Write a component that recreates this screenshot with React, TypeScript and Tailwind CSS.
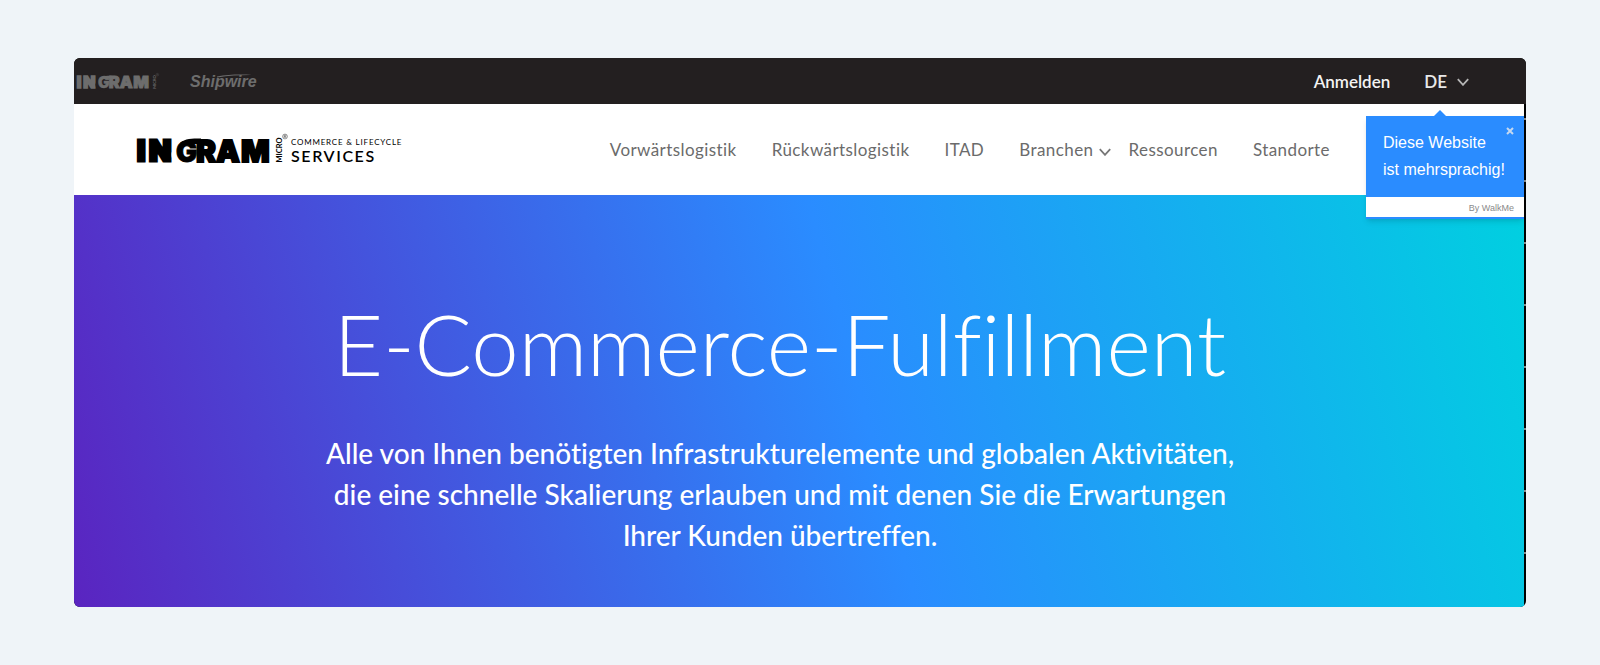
import React from "react";

const navItems = ["Vorwärtslogistik", "Rückwärtslogistik", "ITAD"];

function Chevron({ className }: { className: string }) {
  return (
    <svg viewBox="0 0 12 8" className={className} fill="none" stroke="currentColor" strokeWidth="1.8" aria-hidden="true">
      <path d="M0.8 1.2 6 6.8 11.2 1.2" />
    </svg>
  );
}

function IngramMark({ className, cut }: { className: string; cut: string }) {
  return (
    <svg viewBox="-4 0 156 44" className={className} fill="currentColor" role="img" aria-label="Ingram Micro">
      <g fontFamily="Inter, sans-serif" fontWeight="900" fontSize="30" stroke="currentColor" strokeWidth="1.8">
        <text x="0" y="33" fontSize="29" strokeWidth="3">I</text>
        <text x="12" y="33" fontSize="29" strokeWidth="3">N</text>
        <ellipse cx="48" cy="27" rx="13.5" ry="12" fill={cut} stroke="none" />
        <text x="39" y="33.5" fontSize="28" strokeWidth="1">G</text>
        <path d="M43 15C48 10.5 56 10.6 64 10.6V16H50Z" stroke="none" />
        <text x="59" y="33.5">R</text>
        <text x="79" y="33.5">A</text>
        <text x="104" y="33.5">M</text>
      </g>
      <text transform="translate(145 34.5) rotate(-90)" fontFamily="Lato, sans-serif" fontWeight="700" fontSize="7.5">
        MICRO
      </text>
      <g fill="none" stroke="currentColor" strokeWidth="0.4">
        <circle cx="148" cy="8.5" r="2.4" />
        <path d="M147.2 10V7.2h1.2a.7.7 0 0 1 0 1.5h-1.2M148.3 8.7l.8 1.3" />
      </g>
    </svg>
  );
}

export default function App() {
  return (
    <div className="min-h-screen bg-[#eff4f8] px-[74px] py-[58px] font-['Lato',sans-serif] [font-variant-ligatures:none]">
      <div className="overflow-hidden rounded-md bg-[repeating-linear-gradient(to_bottom,#000000_0px,#000000_60px,#8a8a8a_60px,#8a8a8a_62px)]">
        <div className="flex h-[46px] items-center bg-[#231f20] pt-[2px] pr-[57px]">
          <a href="#ingram" className="text-[#6d6d6d]">
            <IngramMark className="h-6 w-[86px]" cut="#231f20" />
          </a>
          <a
            href="#shipwire"
            className="relative ml-[30px] font-['Liberation_Sans',sans-serif] text-base font-bold text-[#6d6d6d] italic"
          >
            Shipwire
            <svg viewBox="0 0 36 5" className="absolute top-1 right-1 h-[5px] w-9" fill="currentColor" aria-hidden="true">
              <path d="M0 2.6C11 .6 23 .2 35 1 24 .9 12 1.6 0 3.4Z" />
            </svg>
          </a>
          <a href="#login" className="ml-auto text-[17px] font-semibold text-[#f4f4f4]">
            Anmelden
          </a>
          <button className="ml-[34px] flex items-center gap-[10px] text-[17px] font-semibold text-[#e8e8e8]">
            DE
            <Chevron className="h-2 w-3 text-[#b5b5b5]" />
          </button>
        </div>

        <div className="mr-[2px]">
          <header className="relative flex h-[91px] items-center bg-white pr-[194px] pl-[59px]">
            <a href="#home" className="flex items-center text-black">
              <IngramMark className="h-11 w-[156px]" cut="#ffffff" />
              <span className="ml-[2px] flex flex-col">
                <span className="text-[8px] leading-3 tracking-widest">COMMERCE &amp; LIFECYCLE</span>
                <span className="text-base leading-4 font-semibold tracking-widest">SERVICES</span>
              </span>
            </a>
            <nav className="ml-auto flex items-center text-[17px] tracking-wide text-[#6b6b6b]">
              {navItems.map((item) => (
                <a key={item} href="#nav" className="mr-[35px]">
                  {item}
                </a>
              ))}
              <button className="mr-[17px] flex items-center gap-[6px] tracking-wide">
                Branchen
                <Chevron className="mt-1 h-2 w-3 text-[#777777]" />
              </button>
              <a href="#nav" className="mr-[35px]">
                Ressourcen
              </a>
              <a href="#nav">Standorte</a>
            </nav>

            <aside className="absolute top-3 right-0 z-10 w-[158px] border-b-2 border-[#2a8cff] bg-white font-['Liberation_Sans',sans-serif] shadow-md">
              <svg viewBox="0 0 12 6" className="absolute -top-[6px] left-[68px] h-[6px] w-3" aria-hidden="true">
                <path d="M0 6 6 0 12 6Z" fill="#2a8cff" />
              </svg>
              <div className="relative bg-[#2a8cff] px-[17px] pt-[13px] pb-[14px] text-base leading-[27px] text-white">
                Diese Website
                <br />
                ist mehrsprachig!
                <button aria-label="Schließen" className="absolute top-[11px] right-[10px]">
                  <svg viewBox="0 0 8 8" className="h-2 w-2" stroke="#c4d8f0" strokeWidth="2" aria-hidden="true">
                    <path d="M1 1 7 7M7 1 1 7" />
                  </svg>
                </button>
              </div>
              <p className="pt-[2px] pr-[10px] text-right text-[9px] leading-[18px] text-[#8a8a8a]">By WalkMe</p>
            </aside>
          </header>

          <main className="flex h-[412px] flex-col items-center bg-[linear-gradient(75deg,#5a24c0_0%,#2a8cff_54%,#00d0e0_100%)] pt-[98px] pr-[38px] text-center text-white">
            <h1 className="text-[85px] leading-[100px] font-light">E-Commerce-Fulfillment</h1>
            <p className="mt-10 text-[28px] leading-[41px] font-medium">
              Alle von Ihnen benötigten Infrastrukturelemente und globalen Aktivitäten,
              <br />
              die eine schnelle Skalierung erlauben und mit denen Sie die Erwartungen
              <br />
              Ihrer Kunden übertreffen.
            </p>
          </main>
        </div>
      </div>
    </div>
  );
}
